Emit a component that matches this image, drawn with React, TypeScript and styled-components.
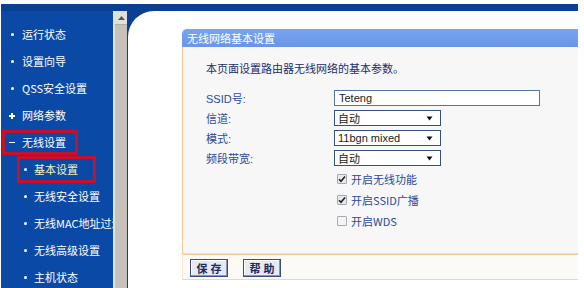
import React from "react";
import styled, { createGlobalStyle, css } from "styled-components";

const Global = createGlobalStyle`
  html, body { margin: 0; padding: 0; background: #ffffff; }
  body { font-family: "Noto Sans CJK SC", "Liberation Sans", sans-serif; overflow: hidden; }
  * { box-sizing: border-box; }
`;

const Page = styled.div`
  width: 584px;
  height: 288px;
  padding: 4px 6px 0 1px;
  display: flex;
  flex-direction: column;
  overflow: hidden;
`;

const TopBand = styled.div`
  height: 7px;
  background: #0b3f94;
  flex: none;
`;

const Main = styled.div`
  flex: 1;
  display: flex;
  min-height: 0;
`;

const Sidebar = styled.nav`
  width: 112px;
  background: #0a4aa6;
  padding-top: 10px;
  overflow: hidden;
  flex: none;
`;

const MenuRow = styled.div`
  height: 27px;
  display: flex;
  align-items: center;
`;

const MenuLabel = styled.div<{ $level: 1 | 2; $active?: boolean; $current?: boolean }>`
  height: ${(p) => (p.$level === 1 ? 25 : 27)}px;
  display: inline-flex;
  align-items: center;
  white-space: nowrap;
  border: 3px solid ${(p) => (p.$active ? "#c7102d" : "transparent")};
  margin-left: ${(p) => (p.$level === 1 ? 1 : 16)}px;
  padding-right: ${(p) => (p.$level === 1 ? 9 : 15)}px;
  font-size: 11px;
  line-height: 1;
  color: ${(p) => (p.$current ? "#f6f3b6" : "#ffffff")};
`;

const Marker = styled.span<{ $level: 1 | 2 }>`
  width: ${(p) => (p.$level === 1 ? 14 : 10)}px;
  margin-right: ${(p) => (p.$level === 1 ? 3 : 4)}px;
  display: inline-flex;
  justify-content: center;
  align-items: center;
  flex: none;
`;

const Dot = styled.span`
  width: 3px;
  height: 3px;
  border-radius: 50%;
  background: #ffffff;
`;

const Dash = styled.span`
  width: 6px;
  height: 1.5px;
  background: #ffffff;
`;

const Plus = styled.span`
  position: relative;
  width: 6px;
  height: 6px;
  &::before, &::after {
    content: "";
    position: absolute;
    background: #ffffff;
  }
  &::before { left: 0; top: 2.5px; width: 6px; height: 1.5px; }
  &::after { left: 2.25px; top: 0; width: 1.5px; height: 6px; }
`;

const Scrollbar = styled.div`
  width: 14px;
  flex: none;
  background: #c6c2b9;
  border-left: 2px solid #e6e3dc;
  display: flex;
  flex-direction: column;
`;

const ScrollButton = styled.div`
  height: 14px;
  background: #e2e0da;
  border-bottom: 1px solid #b3afa6;
  display: flex;
  align-items: center;
  justify-content: center;
`;

const ContentWrap = styled.div`
  flex: 1;
  background: #0b3f94;
  display: flex;
  min-width: 0;
`;

const Content = styled.div`
  flex: 1;
  background: #ffffff;
  border-top-left-radius: 26px;
  padding: 18px 0 0 54px;
  margin-left: 1px;
`;

const Panel = styled.section`
  display: flex;
  flex-direction: column;
`;

const PanelHeader = styled.div`
  height: 18px;
  background: linear-gradient(#78a4f0, #6895e8);
  border-top-left-radius: 5px;
  color: #ffffff;
  font-size: 11px;
  line-height: 18px;
  padding-left: 5px;
`;

const PanelBody = styled.div`
  background: #f7f7f7;
  border-left: 1px solid #f1c894;
  padding: 14px 0 22px 23px;
`;

const Intro = styled.p`
  margin: 0 0 13px 0;
  height: 14px;
  font-size: 11px;
  line-height: 14px;
  color: #1c2d6c;
`;

const FormRow = styled.div<{ $h: number }>`
  height: ${(p) => p.$h}px;
  display: flex;
  align-items: center;
`;

const Label = styled.span`
  width: 128px;
  flex: none;
  font-size: 11px;
  color: #2a4a9c;
  font-family: "Liberation Sans", "Noto Sans CJK SC", sans-serif;
`;

const TextInput = styled.input`
  width: 206px;
  height: 16px;
  border: 1px solid #58759f;
  background: #ffffff;
  font-family: "Liberation Sans", sans-serif;
  font-size: 11px;
  color: #222;
  padding: 0 4px;
  outline: none;
`;

const SelectBox = styled.div`
  width: 107px;
  height: 16px;
  border: 1px solid #34507e;
  background: #ffffff;
  display: flex;
  align-items: center;
  justify-content: space-between;
  padding: 0 7px 0 3px;
  font-family: "Liberation Sans", "Noto Sans CJK SC", sans-serif;
  font-size: 11px;
  color: #1a1a1a;
`;

const CheckWrap = styled.div`
  display: flex;
  align-items: center;
  margin-left: 131px;
  font-size: 11px;
  color: #2a4a9c;
  gap: 4px;
`;

const CheckBox = styled.span<{ $on?: boolean }>`
  width: 10px;
  height: 10px;
  border: 1px solid #a5a9b3;
  border-radius: 1px;
  background: ${(p) => (p.$on ? "#e7e9ee" : "#f3f4f6")};
  display: inline-flex;
  align-items: center;
  justify-content: center;
`;

const Footer = styled.div`
  border-top: 1px solid #d6e2f6;
  box-shadow: inset 0 1px 0 #f1c894;
  border-bottom: 1px solid #f0d6ae;
  background: #fbfaf6;
  height: 27px;
  display: flex;
  align-items: center;
  gap: 15px;
  padding: 2px 0 0 7px;
  border-left: 1px solid #f7e6cc;
`;

const Button = styled.button`
  width: 38px;
  height: 18px;
  padding: 0;
  background: #e4e9f2;
  border: 1px solid #3c4b7c;
  box-shadow: inset -1px -1px 0 #8a94b4, inset 1px 1px 0 #ffffff;
  font-family: "Noto Sans CJK SC", sans-serif;
  font-size: 11px;
  font-weight: 700;
  letter-spacing: 3px;
  text-indent: 3px;
  color: #1f2a58;
  line-height: 16px;
`;

type Item = { text: string; level: 1 | 2; mark: "dot" | "plus" | "dash"; active?: boolean; current?: boolean };

const items: Item[] = [
  { text: "运行状态", level: 1, mark: "dot" },
  { text: "设置向导", level: 1, mark: "dot" },
  { text: "QSS安全设置", level: 1, mark: "dot" },
  { text: "网络参数", level: 1, mark: "plus" },
  { text: "无线设置", level: 1, mark: "dash", active: true },
  { text: "基本设置", level: 2, mark: "dot", active: true, current: true },
  { text: "无线安全设置", level: 2, mark: "dot" },
  { text: "无线MAC地址过滤", level: 2, mark: "dot" },
  { text: "无线高级设置", level: 2, mark: "dot" },
  { text: "主机状态", level: 2, mark: "dot" },
];

const Arrow = () => (
  <svg width="7" height="5" viewBox="0 0 7 5">
    <path d="M0.5 0.5 L6.5 0.5 L3.5 4.5 Z" fill="#111" />
  </svg>
);

const Tick = () => (
  <svg width="8" height="8" viewBox="0 0 8 8">
    <path d="M1 4.2 L3 6.3 L7 1.4" stroke="#222" strokeWidth="1.6" fill="none" />
  </svg>
);

const Select = ({ value }: { value: string }) => (
  <SelectBox>
    <span>{value}</span>
    <Arrow />
  </SelectBox>
);

export default function App() {
  return (
    <>
      <Global />
      <Page>
        <TopBand />
        <Main>
          <Sidebar>
            {items.map((it) => (
              <MenuRow key={it.text}>
                <MenuLabel $level={it.level} $active={it.active} $current={it.current}>
                  <Marker $level={it.level}>
                    {it.mark === "dot" ? <Dot /> : it.mark === "plus" ? <Plus /> : <Dash />}
                  </Marker>
                  {it.text}
                </MenuLabel>
              </MenuRow>
            ))}
          </Sidebar>
          <Scrollbar>
            <ScrollButton>
              <svg width="7" height="4" viewBox="0 0 7 4">
                <path d="M0 4 L3.5 0 L7 4 Z" fill="#555" />
              </svg>
            </ScrollButton>
          </Scrollbar>
          <ContentWrap>
            <Content>
              <Panel>
                <PanelHeader>无线网络基本设置</PanelHeader>
                <PanelBody>
                  <Intro>本页面设置路由器无线网络的基本参数。</Intro>
                  <FormRow $h={20}>
                    <Label>SSID号:</Label>
                    <TextInput value="Teteng" readOnly />
                  </FormRow>
                  <FormRow $h={20}>
                    <Label>信道:</Label>
                    <Select value="自动" />
                  </FormRow>
                  <FormRow $h={20}>
                    <Label>模式:</Label>
                    <Select value="11bgn mixed" />
                  </FormRow>
                  <FormRow $h={20}>
                    <Label>频段带宽:</Label>
                    <Select value="自动" />
                  </FormRow>
                  <FormRow $h={21}>
                    <CheckWrap>
                      <CheckBox $on>
                        <Tick />
                      </CheckBox>
                      开启无线功能
                    </CheckWrap>
                  </FormRow>
                  <FormRow $h={21}>
                    <CheckWrap>
                      <CheckBox $on>
                        <Tick />
                      </CheckBox>
                      开启SSID广播
                    </CheckWrap>
                  </FormRow>
                  <FormRow $h={21}>
                    <CheckWrap>
                      <CheckBox />
                      开启WDS
                    </CheckWrap>
                  </FormRow>
                </PanelBody>
                <Footer>
                  <Button>保存</Button>
                  <Button>帮助</Button>
                </Footer>
              </Panel>
            </Content>
          </ContentWrap>
        </Main>
      </Page>
    </>
  );
}
